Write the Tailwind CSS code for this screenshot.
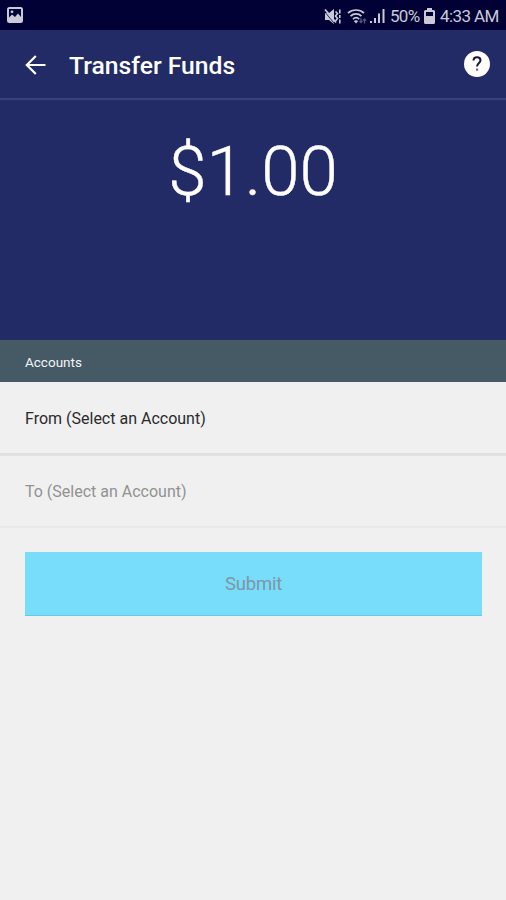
<!DOCTYPE html>
<html lang="en">

<head>
    <meta charset="UTF-8">
    <meta name="viewport" content="width=device-width, initial-scale=1.0">
    <script src="https://cdn.jsdelivr.net/npm/@tailwindcss/browser@4"></script>
    <title>Transfer Funds</title>
</head>

<body class="bg-[#f0f0f0] font-['Roboto',sans-serif] h-screen overflow-hidden">
<!-- status bar -->
<div class="h-[30px] bg-[#010135] flex items-center justify-between pl-[7px] pr-2 text-[#c9c9d8]">
    <svg class="w-4 h-4" viewBox="0 0 16 16">
        <path fill="currentColor" fill-rule="evenodd" d="M2.500 0h11a2.500 2.500 0 0 1 2.500 2.500v11a2.500 2.500 0 0 1-2.500 2.500h-11a2.500 2.500 0 0 1-2.500-2.500v-11a2.500 2.500 0 0 1 2.500-2.500zM2 2v8.500l3-3 3 2.500 3-3.500 3 3.500V2z"/>
        <circle cx="5" cy="4.800" r="1.400" fill="currentColor"/>
    </svg>
    <div class="flex items-center mt-[2px]">
        <svg class="w-[17px] h-[17px] mr-[6px]" viewBox="0 0 17 17" fill="none" stroke="currentColor">
            <path fill="currentColor" stroke="none" d="M1 5h4l5-4v15l-5-4H1z"/>
            <path stroke-width="1.800" d="M1 1.500l11 13"/>
            <path stroke="#010135" stroke-width=".8" d="M0 3l10 12"/>
            <path stroke-width="1.600" d="M11.500 3.500l2 2-2 2.500 2 2.500-2 2.500"/>
            <path stroke-width="1.600" d="M15.800 1.500v4M15.800 7v3M15.800 11.500v4"/>
        </svg>
        <svg class="w-[20px] h-[17px] mr-[3px]" viewBox="0 0 20 17" fill="none" stroke="currentColor">
            <path stroke-width="1.700" d="M1 5c4.500-4 11.500-4 16 0M3.500 8.200c3.200-3 7.800-3 11 0M6 11.200c2-1.900 4.200-1.900 6.200 0"/>
            <path fill="currentColor" stroke="none" d="M6.800 13q2.200-1.500 4.400 0L9 15.500z"/>
            <path stroke="#54547e" stroke-width="1.300" d="M14 10v4.500M12.500 13l1.500 1.500 1.500-1.500M17.500 15.500v-4.500M16 12.500l1.500-1.500 1.500 1.500"/>
        </svg>
        <svg class="w-[15px] h-[16px] mr-[5px]" viewBox="0 0 15 16" fill="currentColor">
            <path d="M0 13h2v2H0zM4 10h2v5H4zM8 5.500h2v9.500H8zM12.500 1h2v14h-2z"/>
        </svg>
        <span class="text-[17px] leading-5 tracking-[-0.7px] w-[30px] whitespace-nowrap">50%</span>
        <svg class="w-[11px] h-[16px] ml-[4px] mr-[5px]" viewBox="0 0 11 16">
            <path fill="currentColor" fill-rule="evenodd" d="M3 0h5v2h1.500Q11 2 11 3.500v11q0 1.500-1.500 1.500h-8Q0 16 0 14.500v-11Q0 2 1.500 2H3zM2 4v4h7V4z"/>
        </svg>
        <span class="text-[17px] leading-5 tracking-[-0.6px] w-[58px] whitespace-nowrap">4:33 AM</span>
    </div>
</div>

<!-- app bar -->
<div class="h-[70px] bg-[#232b67] border-b-2 border-[#3a427b] flex items-center pl-[25px] pr-[16px] text-white">
    <svg class="w-[21px] h-[20px] mt-px" viewBox="0 0 21 20" fill="none" stroke="currentColor" stroke-width="2.200">
        <path d="M20.500 10H2M10.800 1L1.800 10l9 9"/>
    </svg>
    <h1 class="ml-[23px] mt-[3px] text-[24.700px] font-medium leading-8">Transfer Funds</h1>
    <div class="ml-auto w-[26px] h-[26px] rounded-full bg-white text-[#16173a] flex items-center justify-center">
        <svg class="w-[10px] h-[16px]" viewBox="0 0 10 16" fill="none">
            <path stroke="currentColor" stroke-width="2" d="M1.500 4.600Q1.500 1.200 5 1.200t3.500 3.200c0 2.500-3.500 2.600-3.500 6.100"/>
            <path fill="#6d6e80" d="M4 12.500h2.200v2.200H4z"/>
        </svg>
    </div>
</div>

<!-- amount -->
<div class="h-[240px] bg-[#232b67] text-white text-center text-[69px] font-light leading-[83px] pt-[30px]"><span class="[-webkit-text-stroke:0.4px_white]">$1.00</span></div>

<div class="h-[42px] bg-[#465a65] flex items-center pl-[25px] pt-[3px] text-[#f1f5f7] text-[13.500px]">Accounts</div>

<div class="h-[74px] border-b-3 border-[#e0e0e0] flex items-center pl-[25px] pt-[2px] text-[16px] text-[#2b2b2b]">From (Select an Account)</div>
<div class="h-[72px] border-b-2 border-[#e8e8e8] flex items-center pl-[25px] pt-[2px] text-[16px] text-[#929292]">To (Select an Account)</div>

<button type="button" class="block ml-[25px] mt-[24px] w-[457px] h-[64px] bg-[#78dcfb] border-b border-[#62cbea] pt-[3px] text-[18.500px] tracking-[-0.2px] text-[#7c98a3]">Submit</button>
</body>

</html>
